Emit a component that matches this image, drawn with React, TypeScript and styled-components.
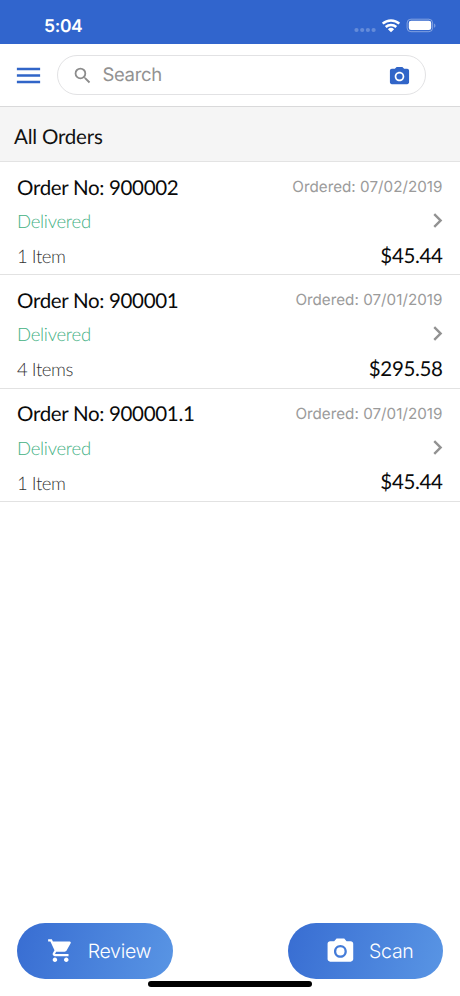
import React from "react";
import styled, { createGlobalStyle } from "styled-components";
import { MdChevronRight, MdMenu, MdPhotoCamera, MdSearch, MdShoppingCart } from "react-icons/md";

const GlobalStyle = createGlobalStyle`
  * { box-sizing: border-box; }
  body {
    margin: 0;
    background: #fff;
    text-rendering: geometricPrecision;
    -webkit-font-smoothing: antialiased;
  }
  svg { display: block; flex: none; }
`;

const Screen = styled.div`
  position: relative;
  display: flex;
  flex-direction: column;
  width: 460px;
  height: 996px;
  overflow: hidden;
  background: #fff;
  font-family: Inter, sans-serif;
`;

const StatusBar = styled.header`
  display: flex;
  align-items: center;
  justify-content: space-between;
  height: 44.4px;
  padding: 6px 24.5px 0 44px;
  background: #3165cd;
  color: #fff;
`;

const Clock = styled.span`
  padding-top: 3px;
  font-size: 17.5px;
  line-height: 20px;
  font-weight: 600;
  letter-spacing: -0.35px;
`;

const StatusIcons = styled.div`
  display: flex;
  align-items: center;
  padding-top: 1px;
`;

const Toolbar = styled.div`
  display: flex;
  align-items: center;
  height: 62.6px;
  padding: 0 34px 0 13px;
  border-bottom: 1px solid #d9d9da;
  color: #3165c8;
`;

const SearchField = styled.div`
  display: flex;
  align-items: center;
  width: 369px;
  height: 40px;
  margin-left: 13px;
  padding: 0 14px 0 14.4px;
  border: 1px solid #e2e2e4;
  border-radius: 20px;
`;

const SearchCamera = styled(MdPhotoCamera)`
  margin-top: 2px;
`;

const Placeholder = styled.span`
  flex: 1;
  margin-left: 8.8px;
  color: #929292;
  font-size: 18.5px;
  line-height: 22px;
  letter-spacing: -0.35px;
`;

const SectionTitle = styled.h1`
  height: 55px;
  margin: 0;
  padding: 4px 14px 0;
  border-bottom: 1px solid #e3e3e3;
  background: #f5f5f5;
  color: #111;
  font: 400 20.5px/52px Lato, sans-serif;
  letter-spacing: -0.2px;
`;

const OrderRow = styled.article`
  display: grid;
  grid-template-columns: 1fr auto;
  grid-template-rows: 34px 34px 34px;
  align-items: center;
  height: 113.3px;
  padding: 7.5px 17.5px 0 17px;
  border-bottom: 1px solid #e2e2e2;
  font-family: Lato, sans-serif;
`;

const OrderNumber = styled.span`
  padding-top: 2.6px;
  color: #0a0a0a;
  font-size: 20.5px;
  letter-spacing: -0.32px;
`;

const OrderDate = styled.span`
  justify-self: end;
  padding-top: 1px;
  color: #9b9b9b;
  font: 400 15.2px/20px Inter, sans-serif;
  letter-spacing: 0.03px;
`;

const OrderStatus = styled.span`
  padding-top: 1px;
  color: #43b083;
  font-size: 18.5px;
  font-weight: 300;
  letter-spacing: -0.28px;
`;

const Chevron = styled(MdChevronRight)`
  justify-self: end;
  margin-right: -9.8px;
  color: #929292;
`;

const ItemCount = styled.span`
  padding-top: 3px;
  color: #333;
  font-size: 18.5px;
  font-weight: 300;
  letter-spacing: -0.45px;
`;

const Total = styled.span`
  justify-self: end;
  padding-top: 2.6px;
  color: #0a0a0a;
  font-size: 20.5px;
  letter-spacing: -0.36px;
`;

const ActionBar = styled.footer`
  display: flex;
  justify-content: space-between;
  margin-top: auto;
  padding: 0 17px 17px;
`;

const ActionButton = styled.button<{ $inset: number; $gap: number }>`
  display: flex;
  align-items: center;
  gap: ${(p) => p.$gap}px;
  width: 155.5px;
  height: 56px;
  padding: 0 0 0 ${(p) => p.$inset}px;
  border: 0;
  border-radius: 28px;
  background: linear-gradient(105deg, #386dd2, #5995e4);
  color: #fff;
  font: 350 19.5px/24px Inter, sans-serif;
  letter-spacing: -0.3px;
  text-rendering: geometricPrecision;
`;

const HomeIndicator = styled.div`
  position: absolute;
  left: 148px;
  bottom: 9px;
  width: 164px;
  height: 6px;
  border-radius: 3px;
  background: #000;
`;

const orders = [
  { number: "900002", date: "07/02/2019", items: "1 Item", total: "$45.44" },
  { number: "900001", date: "07/01/2019", items: "4 Items", total: "$295.58" },
  { number: "900001.1", date: "07/01/2019", items: "1 Item", total: "$45.44" },
];

function StatusGlyphs() {
  return (
    <svg width="82" height="16" viewBox="0 0 82 16">
      <g fill="#fff" fillOpacity=".25">
        <circle cx="2.5" cy="12" r="2.1" />
        <circle cx="8.2" cy="12" r="2.1" />
        <circle cx="13.9" cy="12" r="2.1" />
        <circle cx="19.6" cy="12" r="2.1" />
      </g>
      <g fill="none" stroke="#fff" strokeWidth="2.5">
        <path d="M28.7 5.7a12.2 12.2 0 0 1 16.6 0" />
        <path d="M31.7 9a8 8 0 0 1 10.6 0" />
      </g>
      <path d="M33.9 11.2a4.7 4.7 0 0 1 6.2 0L37 14.3z" fill="#fff" />
      <rect x="53.1" y="1.2" width="25.5" height="12.5" rx="3.8" fill="none" stroke="#fff" strokeOpacity=".4" />
      <rect x="54.8" y="2.8" width="22.4" height="9.3" rx="2.3" fill="#fff" />
      <path d="M80.1 5.4c1.8.7 1.8 3.6 0 4.3z" fill="#fff" fillOpacity=".4" />
    </svg>
  );
}

export default function App() {
  return (
    <Screen>
      <GlobalStyle />
      <StatusBar>
        <Clock>5:04</Clock>
        <StatusIcons><StatusGlyphs /></StatusIcons>
      </StatusBar>
      <Toolbar>
        <MdMenu size={31} />
        <SearchField>
          <MdSearch size={21.3} color="#8c8c8c" />
          <Placeholder>Search</Placeholder>
          <SearchCamera size={23} />
        </SearchField>
      </Toolbar>
      <SectionTitle>All Orders</SectionTitle>
      <main>
        {orders.map((order) => (
          <OrderRow key={order.number}>
            <OrderNumber>Order No: {order.number}</OrderNumber>
            <OrderDate>Ordered: {order.date}</OrderDate>
            <OrderStatus>Delivered</OrderStatus>
            <Chevron size={29} />
            <ItemCount>{order.items}</ItemCount>
            <Total>{order.total}</Total>
          </OrderRow>
        ))}
      </main>
      <ActionBar>
        <ActionButton $inset={30} $gap={13.5}>
          <MdShoppingCart size={27.2} />
          Review
        </ActionButton>
        <ActionButton $inset={37} $gap={13.8}>
          <MdPhotoCamera size={30.8} />
          Scan
        </ActionButton>
      </ActionBar>
      <HomeIndicator />
    </Screen>
  );
}
